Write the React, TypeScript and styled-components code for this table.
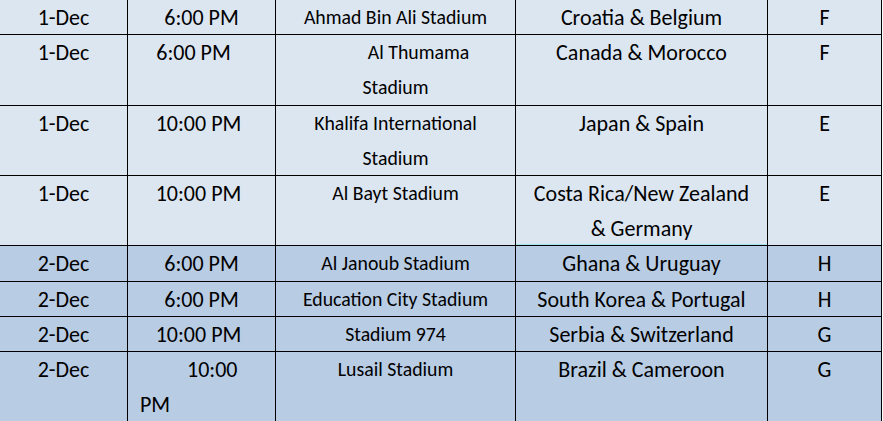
import React from 'react';
import styled, { createGlobalStyle } from 'styled-components';

const GlobalStyle = createGlobalStyle`
  html, body {
    margin: 0;
    padding: 0;
    background: #ffffff;
  }
  body {
    width: 883px;
    height: 421px;
    overflow: hidden;
    font-family: Carlito, Calibri, Lato, "Open Sans", sans-serif;
  }
`;

const LINE = 35.2;

const Sheet = styled.div`
  display: flex;
  flex-direction: column;
  width: 882px;
`;

const Row = styled.div<{ $dark?: boolean; $lines: number }>`
  display: grid;
  grid-template-columns: 128px 148px 240px 252px 114px;
  height: ${(p) => p.$lines * LINE}px;
  background: ${(p) => (p.$dark ? '#b8cce4' : '#dce6f1')};
  border-bottom: 1px solid #000000;
  box-sizing: border-box;
  flex-shrink: 0;
`;

const Cell = styled.div<{ $small?: boolean; $marked?: boolean }>`
  box-sizing: border-box;
  border-right: 1px solid #000000;
  text-align: center;
  color: #000000;
  font-size: ${(p) => (p.$small ? '19.8px' : '22px')};
  line-height: ${LINE}px;
  white-space: nowrap;
  overflow: hidden;
  box-shadow: ${(p) => (p.$marked ? 'inset 0 -1px 0 #a3e4ec' : 'none')};
`;

/* shift > 0 pushes centred text right, shift < 0 pulls it left */
const Line = styled.span<{ $shift?: number }>`
  display: block;
  padding-left: ${(p) => (p.$shift && p.$shift > 0 ? p.$shift * 2 : 0)}px;
  padding-right: ${(p) => (p.$shift && p.$shift < 0 ? -p.$shift * 2 : 0)}px;
`;

const LeftText = styled.div`
  text-align: left;
  padding-left: 12px;
`;

const Indented = styled.span`
  display: block;
  padding-left: 47px;
`;

interface Match {
  date: string;
  time: React.ReactNode;
  stadium: React.ReactNode;
  teams: React.ReactNode;
  group: string;
  lines: number;
  dark?: boolean;
  marked?: boolean;
}

const matches: Match[] = [
  { date: '1-Dec', time: '6:00 PM', stadium: 'Ahmad Bin Ali Stadium', teams: 'Croatia & Belgium', group: 'F', lines: 1 },
  {
    date: '1-Dec',
    time: <Line $shift={-8}>6:00 PM</Line>,
    stadium: (
      <>
        <Line $shift={23}>Al Thumama</Line>
        <Line>Stadium</Line>
      </>
    ),
    teams: 'Canada & Morocco',
    group: 'F',
    lines: 2,
  },
  {
    date: '1-Dec',
    time: <Line $shift={-3}>10:00 PM</Line>,
    stadium: (
      <>
        <Line>Khalifa International</Line>
        <Line>Stadium</Line>
      </>
    ),
    teams: 'Japan & Spain',
    group: 'E',
    lines: 2,
  },
  {
    date: '1-Dec',
    time: <Line $shift={-3}>10:00 PM</Line>,
    stadium: 'Al Bayt Stadium',
    teams: (
      <>
        <Line>Costa Rica/New Zealand</Line>
        <Line>& Germany</Line>
      </>
    ),
    group: 'E',
    lines: 2,
    marked: true,
  },
  { date: '2-Dec', time: '6:00 PM', stadium: 'Al Janoub Stadium', teams: 'Ghana & Uruguay', group: 'H', lines: 1, dark: true },
  { date: '2-Dec', time: '6:00 PM', stadium: 'Education City Stadium', teams: 'South Korea & Portugal', group: 'H', lines: 1, dark: true },
  { date: '2-Dec', time: <Line $shift={-3}>10:00 PM</Line>, stadium: 'Stadium 974', teams: 'Serbia & Switzerland', group: 'G', lines: 1, dark: true },
  {
    date: '2-Dec',
    time: (
      <LeftText>
        <Indented>10:00</Indented>
        <span>PM</span>
      </LeftText>
    ),
    stadium: 'Lusail Stadium',
    teams: 'Brazil & Cameroon',
    group: 'G',
    lines: 2,
    dark: true,
  },
];

export default function App() {
  return (
    <>
      <GlobalStyle />
      <Sheet>
        {matches.map((m, i) => (
          <Row key={i} $dark={m.dark} $lines={m.lines}>
            <Cell>{m.date}</Cell>
            <Cell>{m.time}</Cell>
            <Cell $small>{m.stadium}</Cell>
            <Cell $marked={m.marked}>{m.teams}</Cell>
            <Cell>{m.group}</Cell>
          </Row>
        ))}
      </Sheet>
    </>
  );
}
